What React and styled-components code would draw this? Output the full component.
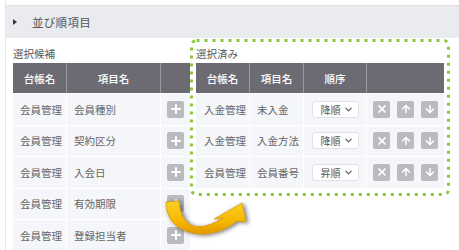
import React from 'react';
import styled, { createGlobalStyle } from 'styled-components';
import { Plus, X, ArrowUp, ArrowDown, ChevronDown } from 'lucide-react';

const candidates = [
    ['会員管理', '会員種別'],
    ['会員管理', '契約区分'],
    ['会員管理', '入会日'],
    ['会員管理', '有効期限'],
    ['会員管理', '登録担当者'],
];

const selected = [
    { book: '入金管理', item: '未入金', order: '降順' },
    { book: '入金管理', item: '入金方法', order: '降順' },
    { book: '会員管理', item: '会員番号', order: '昇順' },
];

const LEFT_COLS = '53px 94px 30px';
const RIGHT_COLS = '53px 54px 63px 78px';

const App = () => {
    return (
        <>
            <GlobalStyle />
            <Page>
                <Gutter />
                <Main>
                    <Header>
                        <Triangle />
                        並び順項目
                    </Header>
                    <Body>
                        <LeftSection>
                            <Label>選択候補</Label>
                            <HeadRow $cols={LEFT_COLS}>
                                <HeadCell>台帳名</HeadCell>
                                <HeadCell>項目名</HeadCell>
                                <HeadCell />
                            </HeadRow>
                            {candidates.map(([book, item], i) => (
                                <Row key={i} $cols={LEFT_COLS}>
                                    <Cell>{book}</Cell>
                                    <Cell>{item}</Cell>
                                    <Cell $center>
                                        <IconButton>
                                            <Plus size={14} strokeWidth={3.5} />
                                        </IconButton>
                                    </Cell>
                                </Row>
                            ))}
                        </LeftSection>
                        <Frame>
                            <DottedBorder>
                                <rect x="1.5" y="1.5" width="257" height="154" rx="5" ry="5" />
                            </DottedBorder>
                            <Label>選択済み</Label>
                            <HeadRow $cols={RIGHT_COLS}>
                                <HeadCell>台帳名</HeadCell>
                                <HeadCell>項目名</HeadCell>
                                <HeadCell>順序</HeadCell>
                                <HeadCell />
                            </HeadRow>
                            {selected.map((r, i) => (
                                <Row key={i} $cols={RIGHT_COLS}>
                                    <Cell $pad={8}>{r.book}</Cell>
                                    <Cell>{r.item}</Cell>
                                    <Cell $center>
                                        <OrderSelect>
                                            {r.order}
                                            <ChevronDown size={11} strokeWidth={2.2} />
                                        </OrderSelect>
                                    </Cell>
                                    <Cell $center>
                                        <Actions>
                                            <IconButton><X size={12} strokeWidth={3.5} /></IconButton>
                                            <IconButton><ArrowUp size={12} strokeWidth={3} /></IconButton>
                                            <IconButton><ArrowDown size={12} strokeWidth={3} /></IconButton>
                                        </Actions>
                                    </Cell>
                                </Row>
                            ))}
                        </Frame>
                    </Body>
                </Main>
                <MoveArrow viewBox="160 190 95 55">
                    <defs>
                        <linearGradient id="gold" x1="0" y1="0" x2="0" y2="1">
                            <stop offset="0" stopColor="#fbd226" />
                            <stop offset="0.6" stopColor="#f5b700" />
                            <stop offset="1" stopColor="#e39a00" />
                        </linearGradient>
                        <filter id="shade" x="-30%" y="-30%" width="160%" height="160%">
                            <feDropShadow dx="2" dy="1" stdDeviation="2" floodColor="#000" floodOpacity="0.55" />
                        </filter>
                    </defs>
                    <g filter="url(#shade)" stroke="#c98b00" strokeWidth="0.6" fill="url(#gold)">
                        <path d="M166 202 C166 215 172 228 192 233 C208 237 226 230 237 221 L246 222 L242 203 L214 219 L223 218 C214 224 203 228 194 226 C184 223 180 214 179 201 Z" />
                    </g>
                </MoveArrow>
            </Page>
        </>
    );
};

export default App;

const GlobalStyle = createGlobalStyle`
    html, body {
        margin: 0;
        padding: 0;
        overflow: hidden;
        background: #ffffff;
    }
    body {
        font-family: "Noto Sans CJK JP", "Noto Sans", sans-serif;
    }
`;

const Page = styled.div`
    position: relative;
    display: flex;
    width: 459px;
    height: 250px;
    overflow: hidden;
`;

const Gutter = styled.div`
    width: 5px;
    border-right: 1px solid #e6e7ea;
`;

const Main = styled.div`
    flex: 1;
    padding-top: 5px;
`;

const Header = styled.div`
    display: flex;
    align-items: center;
    height: 32px;
    padding-left: 7px;
    background: #e9ebee;
    border-top: 1px solid #dfe1e5;
    color: #555;
    font-size: 11.5px;
    letter-spacing: 0.3px;
`;

const Triangle = styled.span`
    width: 0;
    height: 0;
    margin-right: 15px;
    border-top: 3px solid transparent;
    border-bottom: 3px solid transparent;
    border-left: 4px solid #3a3a3a;
`;

const Body = styled.div`
    display: flex;
    align-items: flex-start;
    padding: 1px 0 0 7px;
`;

const LeftSection = styled.div`
    width: 177px;
    padding-top: 8px;
`;

const Frame = styled.div`
    position: relative;
    width: 260px;
    padding: 8px 6px 7.5px;
    box-sizing: border-box;
`;

const DottedBorder = styled.svg`
    position: absolute;
    left: 0;
    top: 0;
    width: 260px;
    height: 157px;
    overflow: visible;
    fill: none;
    stroke: #8cc63e;
    stroke-width: 3;
    stroke-dasharray: 3 5;
`;

const Label = styled.div`
    height: 14px;
    margin-bottom: 2px;
    line-height: 14px;
    color: #555;
    font-size: 10.5px;
`;

const HeadRow = styled.div`
    display: grid;
    grid-template-columns: ${p => p.$cols};
    height: 31px;
    box-sizing: border-box;
    background: #6c6b74;
    border-bottom: 1px solid #ffffff;
`;

const HeadCell = styled.div`
    display: flex;
    align-items: center;
    justify-content: center;
    color: #ffffff;
    font-size: 10.5px;
    font-weight: 500;
    & + & {
        border-left: 1px solid #9a99a1;
    }
`;

const Row = styled.div`
    display: grid;
    grid-template-columns: ${p => p.$cols};
    height: 31.5px;
    box-sizing: border-box;
    background: #f5f6f9;
    border-bottom: 1px solid #ffffff;
`;

const Cell = styled.div`
    display: flex;
    align-items: center;
    justify-content: ${p => (p.$center ? 'center' : 'flex-start')};
    padding-left: ${p => (p.$center ? 0 : p.$pad || 7)}px;
    color: #666;
    font-size: 10.5px;
    white-space: nowrap;
    & + & {
        border-left: 1px solid #ffffff;
    }
`;

const IconButton = styled.span`
    display: flex;
    align-items: center;
    justify-content: center;
    width: 17px;
    height: 17px;
    border-radius: 2px;
    background: #b9bbbe;
    color: #ffffff;
`;

const Actions = styled.div`
    display: flex;
    gap: 7px;
`;

const OrderSelect = styled.span`
    display: flex;
    align-items: center;
    justify-content: space-between;
    width: 47px;
    height: 17px;
    padding: 0 4px 0 8px;
    box-sizing: border-box;
    background: #ffffff;
    border: 1px solid #e1e2e5;
    border-radius: 3px;
    color: #555;
    font-size: 10px;
`;

const MoveArrow = styled.svg`
    position: absolute;
    left: 160px;
    top: 190px;
    width: 95px;
    height: 55px;
    overflow: visible;
`;
